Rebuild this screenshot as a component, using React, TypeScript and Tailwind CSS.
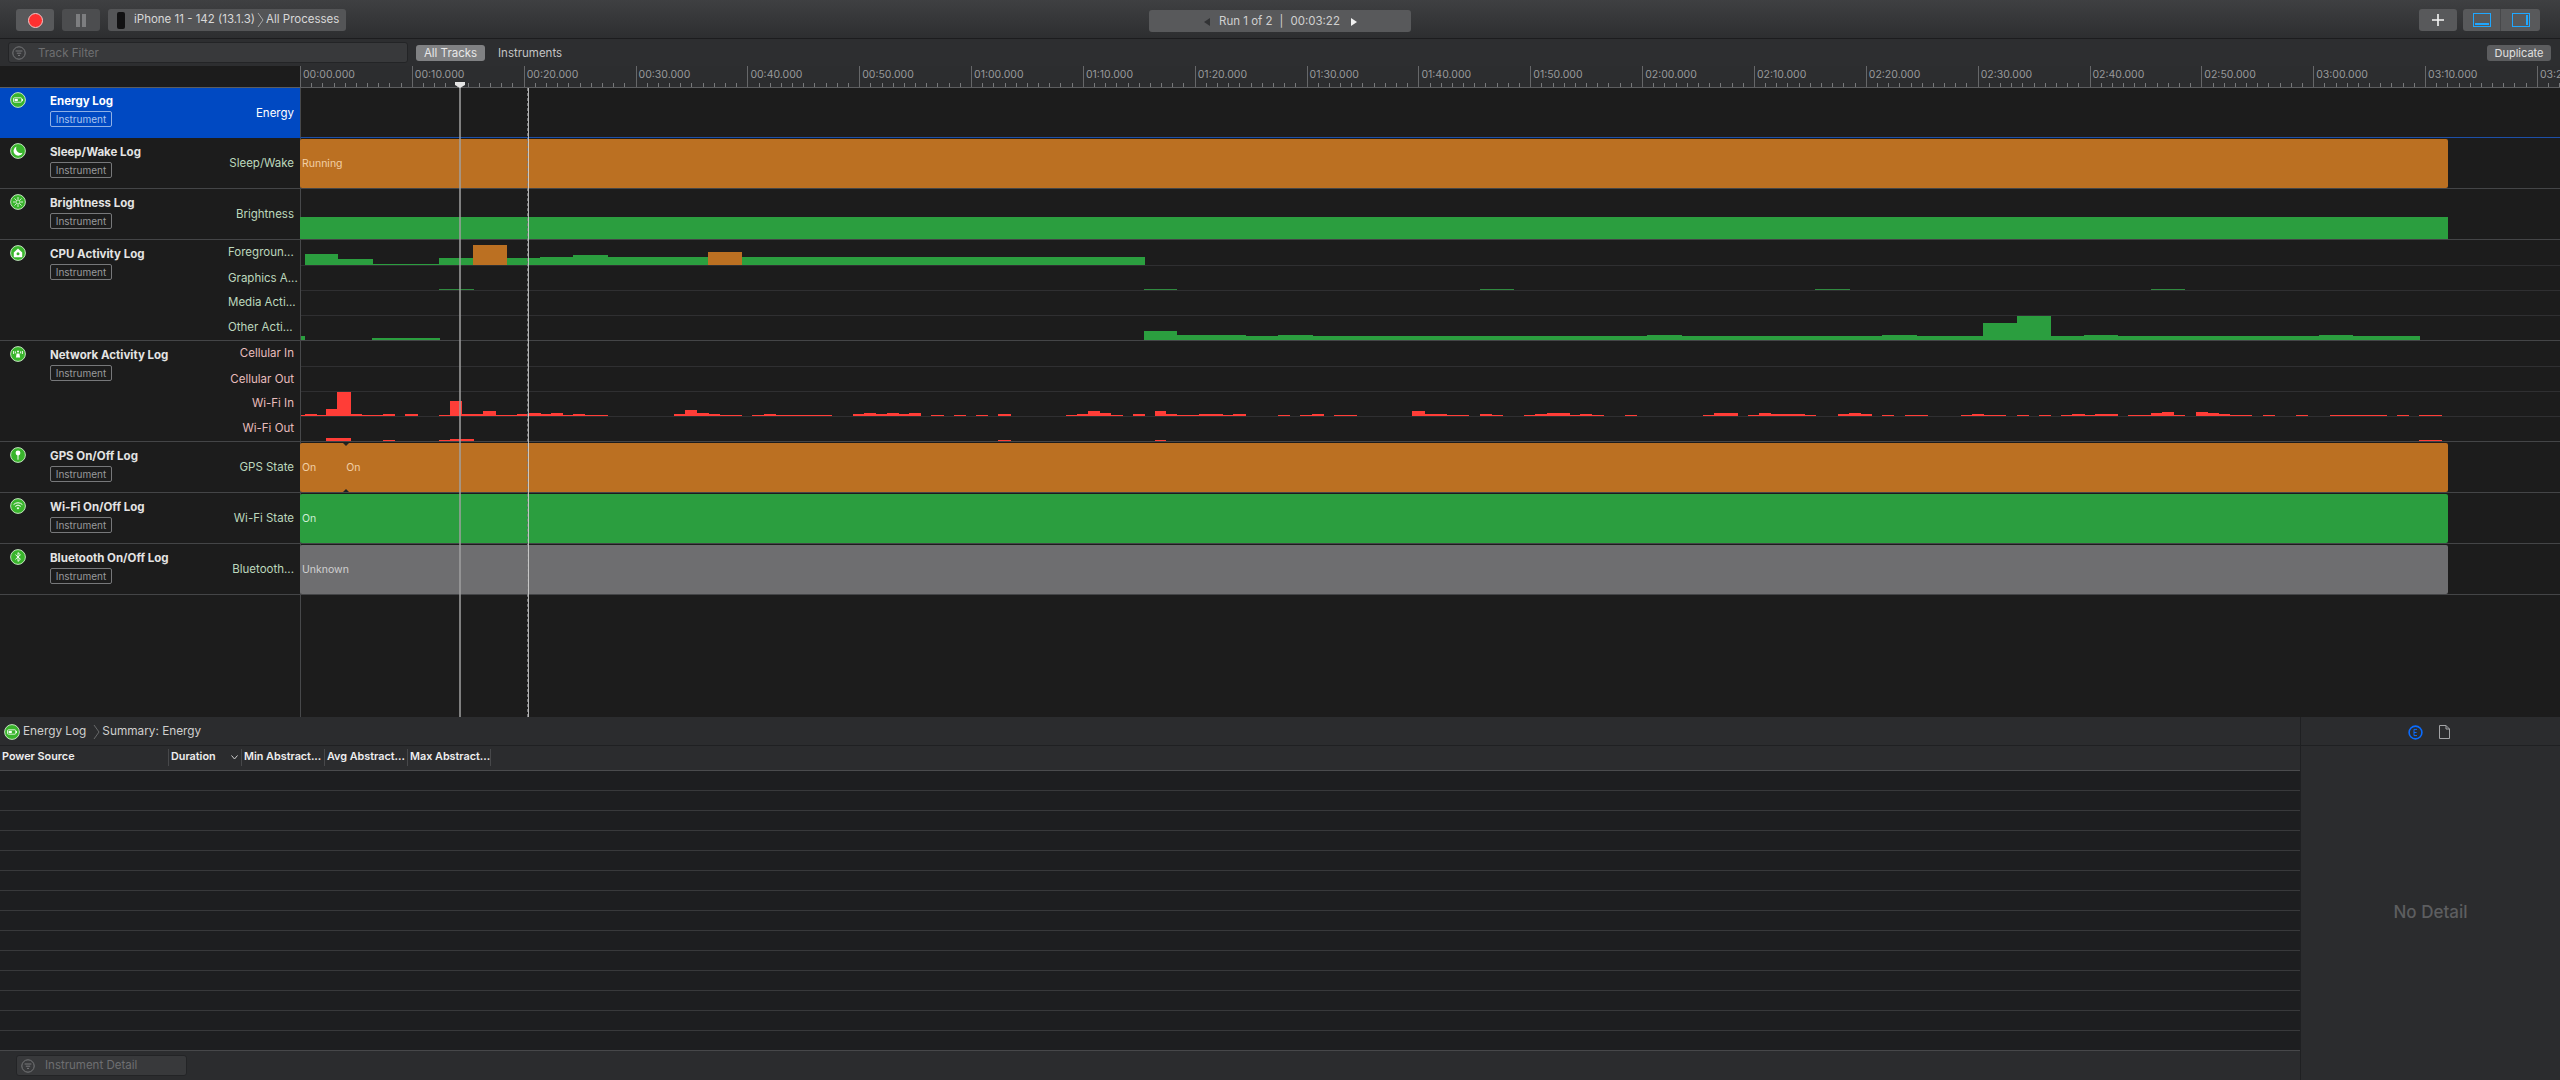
import type { ReactNode } from "react";

type Bar = [number, number, number, string?];

const GREEN = "#2b9e3f";
const ORANGE = "#bb7022";
const RED = "#ff3d37";

// bars use page x coordinates: [from, to, height, colour]
const foreground: Bar[] = [
  [305, 338, 11], [338, 373, 6], [373, 439, 1], [439, 473, 7], [473, 507, 20, ORANGE],
  [507, 540, 7], [540, 573, 8], [573, 608, 10], [608, 708, 8], [708, 742, 13, ORANGE],
  [742, 1145, 8],
];
const graphics: Bar[] = [
  [439, 474, 1], [1144, 1177, 1], [1480, 1514, 1], [1815, 1850, 1], [2151, 2185, 1],
];
const other: Bar[] = [
  [301, 305, 4], [372, 440, 2], [1144, 1177, 9], [1177, 1246, 5], [1246, 1278, 4],
  [1278, 1313, 5], [1313, 1647, 4], [1647, 1682, 5], [1682, 1882, 4], [1882, 1917, 5],
  [1917, 1983, 4], [1983, 2017, 17], [2017, 2051, 24], [2051, 2084, 4], [2084, 2118, 5],
  [2118, 2319, 4], [2319, 2353, 5], [2353, 2420, 4],
];
const wifiIn: Bar[] = [
  [301, 305, 1], [305, 317, 2], [317, 326, 1], [326, 337, 7], [337, 351, 24], [351, 362, 2],
  [362, 383, 1], [383, 395, 2], [405, 418, 2], [439, 450, 1], [450, 462, 15], [462, 483, 2],
  [483, 496, 5], [496, 517, 1], [517, 529, 2], [529, 541, 3], [541, 551, 2], [551, 563, 3],
  [563, 573, 1], [573, 585, 2], [585, 608, 1], [674, 685, 2], [685, 697, 6], [697, 709, 3],
  [709, 720, 2], [720, 742, 1], [752, 764, 1], [764, 776, 2], [776, 832, 1], [853, 864, 2],
  [864, 876, 3], [876, 887, 2], [887, 899, 3], [899, 909, 2], [909, 921, 3], [931, 944, 1],
  [954, 966, 1], [976, 988, 1], [998, 1011, 2], [1066, 1077, 1], [1077, 1088, 2], [1088, 1100, 5],
  [1100, 1111, 3], [1111, 1123, 1], [1133, 1145, 2], [1155, 1166, 5], [1166, 1177, 2],
  [1177, 1199, 1], [1199, 1223, 2], [1223, 1233, 1], [1233, 1246, 2], [1278, 1290, 1],
  [1300, 1312, 1], [1312, 1324, 2], [1334, 1357, 1], [1412, 1425, 5], [1425, 1447, 2],
  [1447, 1469, 1], [1480, 1492, 2], [1492, 1503, 1], [1524, 1535, 1], [1535, 1547, 2],
  [1547, 1570, 3], [1570, 1580, 1], [1580, 1592, 2], [1592, 1604, 1], [1625, 1637, 1],
  [1703, 1714, 1], [1714, 1738, 3], [1748, 1759, 1], [1759, 1771, 3], [1771, 1805, 2],
  [1805, 1816, 1], [1838, 1849, 2], [1849, 1861, 3], [1861, 1872, 2], [1882, 1894, 1],
  [1905, 1928, 1], [1961, 1972, 1], [1972, 1984, 2], [1984, 2006, 1], [2017, 2029, 1],
  [2039, 2051, 1], [2061, 2072, 1], [2072, 2085, 2], [2085, 2095, 1], [2095, 2118, 2],
  [2128, 2151, 1], [2151, 2162, 3], [2162, 2174, 4], [2174, 2185, 1], [2196, 2208, 4],
  [2208, 2219, 3], [2219, 2230, 2], [2230, 2252, 1], [2263, 2275, 1], [2296, 2308, 1],
  [2330, 2387, 1], [2397, 2409, 1], [2419, 2442, 1],
];
const wifiOut: Bar[] = [
  [326, 351, 3], [383, 395, 1], [439, 450, 1], [450, 474, 2], [998, 1011, 1], [1155, 1166, 1],
  [2419, 2442, 1],
];

const rulerLabels = Array.from({ length: 21 }, (_, i) => {
  const total = i * 10;
  const min = String(Math.floor(total / 60)).padStart(2, "0");
  const sec = String(total % 60).padStart(2, "0");
  return `${min}:${sec}.000`;
});

function LogIcon({ children, size = 16 }: { children?: ReactNode; size?: number }) {
  return (
    <svg width={size} height={size} viewBox="0 0 16 16" className="shrink-0">
      <circle cx="8" cy="8" r="7.4" fill="#39b52c" stroke="#d5efd0" strokeWidth="0.9" />
      {children}
    </svg>
  );
}

const icons: Record<string, ReactNode> = {
  energy: (
    <>
      <rect x="3.5" y="5.8" width="8.2" height="4.4" rx="0.8" fill="none" stroke="#fff" strokeWidth="0.8" />
      <rect x="4.6" y="6.9" width="3.2" height="2.2" fill="#fff" />
      <rect x="12" y="7" width="0.9" height="2" fill="#fff" />
    </>
  ),
  moon: <path d="M6.6 3.6a4.7 4.7 0 1 0 6 6.2 4.6 4.6 0 0 1-6-6.2z" fill="#fff" />,
  sun: (
    <>
      <circle cx="8" cy="8" r="2.1" fill="none" stroke="#fff" strokeWidth="0.8" />
      <path d="M8 3v2M8 11v2M3 8h2M11 8h2M4.5 4.5l1.4 1.4M10.1 10.1l1.4 1.4M11.5 4.5l-1.4 1.4M5.9 10.1l-1.4 1.4" stroke="#fff" strokeWidth="0.8" />
    </>
  ),
  cpu: (
    <>
      <path d="M8 3.6l4.2 4v4.6H3.8V7.6z" fill="#fff" />
      <circle cx="8" cy="8.8" r="1.5" fill="#39b52c" />
    </>
  ),
  network: (
    <>
      <path d="M3.6 5v3M12.4 5v3M5.4 5.4v2M10.6 5.4v2" stroke="#fff" strokeWidth="0.9" />
      <path d="M6.6 7.5h2.8l.7 4H5.9z" fill="#fff" />
      <circle cx="8" cy="5.4" r="1" fill="#fff" />
    </>
  ),
  gps: (
    <>
      <circle cx="8" cy="6" r="2.4" fill="#fff" />
      <rect x="7.5" y="7.5" width="1" height="5.2" fill="#fff" />
    </>
  ),
  wifi: (
    <>
      <path d="M3.6 6.6a6.2 6.2 0 0 1 8.8 0M5.2 8.4a4 4 0 0 1 5.6 0" fill="none" stroke="#fff" strokeWidth="1" />
      <path d="M6.6 10a2 2 0 0 1 2.8 0L8 11.6z" fill="#fff" />
    </>
  ),
  bluetooth: <path d="M5.4 5.6l5 4.6L8 12.4V3.6l2.4 2.2-5 4.6" fill="none" stroke="#fff" strokeWidth="0.9" />,
};

function FilterIcon() {
  return (
    <svg width="14" height="14" viewBox="0 0 14 14" className="shrink-0">
      <circle cx="7" cy="7" r="6.2" fill="none" stroke="#77787a" strokeWidth="1" />
      <path d="M3.6 5h6.8M4.8 7.2h4.4M6 9.4h2" stroke="#77787a" strokeWidth="1" />
    </svg>
  );
}

function Bars({ bars, height, color }: { bars: Bar[]; height: number; color: string }) {
  return (
    <svg width={2259} height={height} className="block">
      {bars.map(([from, to, h, fill], i) => (
        <rect key={i} x={from - 301} y={height - h} width={to - from} height={h} fill={fill ?? color} />
      ))}
    </svg>
  );
}

function Band({ color, className, children }: { color: string; className: string; children?: ReactNode }) {
  return (
    <div className={`relative mt-px -ml-px flex h-[49px] w-[2148px] items-center rounded-[2px] pl-[2px] pt-[1px] text-[10.5px] ${className}`} style={{ backgroundColor: color }}>
      {children}
    </div>
  );
}

function TrackTitle({ icon, title, selected }: { icon: string; title: string; selected?: boolean }) {
  return (
    <div className="flex w-[150px] shrink-0 items-start">
      <div className={`ml-[10px] w-[40px] shrink-0 ${selected ? "mt-[4px]" : "mt-[5px]"}`}>
        <LogIcon>{icons[icon]}</LogIcon>
      </div>
      <div className="shrink-0">
        <div className={`whitespace-nowrap text-[11.5px] font-bold leading-[16px] ${selected ? "mt-[5px] text-white" : "mt-[6px] text-[#e4e4e4]"}`}>
          {title}
        </div>
        <div className={`mt-[2px] flex h-[16px] w-[62px] items-center justify-center rounded-[2px] border text-[10px] ${selected ? "border-[#8fb0e6] text-[#a9c3ee]" : "border-[#77787a] text-[#98999b]"}`}>
          Instrument
        </div>
      </div>
    </div>
  );
}

function SimpleTrack({ icon, title, label, height = "h-[51px]", selected, border, children }: {
  icon: string;
  title: string;
  label: string;
  height?: string;
  selected?: boolean;
  border?: string;
  children?: ReactNode;
}) {
  return (
    <div className={`flex ${height}`}>
      <div className={`flex w-[300px] shrink-0 border-b ${selected ? "border-[#0049c2] bg-[#0049c2]" : "border-[#444547]"}`}>
        <TrackTitle icon={icon} title={title} selected={selected} />
        <div className={`flex flex-1 items-center justify-end pr-[6px] pt-[2px] text-[11.5px] ${selected ? "text-white" : "text-[#bcd8bd]"}`}>
          {label}
        </div>
      </div>
      <div className={`flex min-w-0 flex-1 flex-col border-b border-l border-l-[#47484a] ${border ?? "border-b-[#444547]"}`}>
        {children}
      </div>
    </div>
  );
}

function LaneTrack({ icon, title, lanes, labelClass }: {
  icon: string;
  title: string;
  labelClass: string;
  lanes: { label: string; bars: Bar[]; color: string }[];
}) {
  return (
    <div className="flex h-[101px]">
      <div className="flex w-[300px] shrink-0 border-b border-[#444547]">
        <TrackTitle icon={icon} title={title} />
        <div className="flex flex-1 flex-col pr-[6px] text-[11.5px]">
          {lanes.map((lane, i) => (
            <div key={lane.label} className={`flex w-full items-center ${i === 0 ? "h-[26px]" : "h-[25px]"} ${labelClass}`}>
              <span className="whitespace-nowrap">{lane.label}</span>
            </div>
          ))}
        </div>
      </div>
      <div className="flex min-w-0 flex-1 flex-col border-b border-l border-b-[#444547] border-l-[#47484a]">
        {lanes.map((lane, i) => (
          <div key={lane.label} className={i < 3 ? "border-b border-[#2f2f31]" : ""}>
            <Bars bars={lane.bars} color={lane.color} height={i === 0 ? 25 : 24} />
          </div>
        ))}
      </div>
    </div>
  );
}

function Ruler() {
  return (
    <div className="flex h-[22px] border-b border-[#5c5d5f]">
      <div className="w-[300px] shrink-0 bg-[#1c1c1c]" />
      <div className="flex min-w-0 flex-1 overflow-hidden bg-[#2c2d2f]">
        {rulerLabels.map((label) => (
          <div key={label} className="flex h-full w-[111.85px] shrink-0 flex-col border-l border-[#666769]">
            <div className="h-[16px] pl-[2px] pt-[1px] text-[10.5px] leading-[15px] text-[#98999b]">{label}</div>
            <div className="flex h-[5px] items-end">
              {Array.from({ length: 9 }, (_, i) => (
                <div key={i} className="ml-[10.18px] h-[4px] w-px bg-[#77787a]" />
              ))}
            </div>
          </div>
        ))}
      </div>
    </div>
  );
}

function Toolbar() {
  return (
    <div className="relative flex h-[39px] items-center border-b border-[#1c1c1e] bg-gradient-to-b from-[#3f4042] to-[#2d2e30] pl-[16px] pr-[20px] pt-[2px]">
      <div className="flex h-[22px] w-[38px] items-center justify-center rounded-[3px] bg-[#58595b]">
        <div className="h-[15px] w-[15px] rounded-full border border-[#f4c8c8] bg-[#ff3030]" />
      </div>
      <div className="ml-[8px] flex h-[22px] w-[38px] items-center justify-center gap-[2px] rounded-[3px] bg-[#4c4d4f]">
        <div className="h-[13px] w-[4px] bg-[#7d7e80]" />
        <div className="h-[13px] w-[4px] bg-[#7d7e80]" />
      </div>
      <div className="ml-[8px] flex h-[22px] w-[238px] items-center rounded-[3px] bg-[#545557] pl-[9px] text-[11.5px] text-[#d8d8d8]">
        <div className="h-[17px] w-[8px] rounded-[2px] bg-[#111112]" />
        <span className="ml-[9px] whitespace-nowrap">iPhone 11 - 142 (13.1.3)</span>
        <svg width="7" height="16" viewBox="0 0 7 16" className="mx-[2px]">
          <path d="M1 1l5 7-5 7" fill="none" stroke="#bdbdbd" strokeWidth="0.8" />
        </svg>
        <span className="whitespace-nowrap">All Processes</span>
      </div>

      <div className="absolute left-[1149px] top-[10px] flex h-[22px] w-[262px] items-center rounded-[3px] bg-[#58595b] pl-[55px] pt-[1px] text-[11.5px] text-[#d0d0d0]">
        <svg width="6" height="8" viewBox="0 0 6 8"><path d="M6 0v8L0 4z" fill="#323335" /></svg>
        <span className="ml-[9px] whitespace-nowrap">Run 1 of 2</span>
        <span className="ml-[7px]">|</span>
        <span className="ml-[7px] whitespace-nowrap">00:03:22</span>
        <svg width="6" height="8" viewBox="0 0 6 8" className="ml-[11px]"><path d="M0 0v8l6-4z" fill="#f0f0f0" /></svg>
      </div>

      <div className="ml-auto flex h-[22px] w-[38px] items-center justify-center rounded-[3px] bg-[#58595b]">
        <svg width="14" height="14" viewBox="0 0 14 14"><path d="M7 1v12M1 7h12" stroke="#f5f5f5" strokeWidth="1.6" /></svg>
      </div>
      <div className="ml-[6px] flex h-[22px] w-[77px] items-center rounded-[3px] bg-[#58595b]">
        <div className="flex h-full w-[38px] items-center justify-center border-r border-[#47484a]">
          <svg width="18" height="14" viewBox="0 0 18 14">
            <rect x="0.5" y="0.5" width="17" height="13" fill="none" stroke="#1fa7ff" />
            <rect x="2" y="10" width="14" height="2" fill="#1fa7ff" />
          </svg>
        </div>
        <div className="flex h-full flex-1 items-center justify-center">
          <svg width="18" height="14" viewBox="0 0 18 14">
            <rect x="0.5" y="0.5" width="17" height="13" fill="none" stroke="#1fa7ff" />
            <rect x="14" y="2" width="2" height="10" fill="#1fa7ff" />
          </svg>
        </div>
      </div>
    </div>
  );
}

function FilterBar() {
  return (
    <div className="flex h-[27px] items-center bg-[#2d2e30] pl-[8px] pr-[9px]">
      <div className="flex h-[21px] w-[400px] items-center rounded-[3px] border border-[#232426] bg-[#38393b] pl-[3px] pt-[0px] text-[11.5px] text-[#6e6f71]">
        <FilterIcon />
        <span className="ml-[12px] pt-[2px]">Track Filter</span>
      </div>
      <div className="ml-[8px] mt-[1px] flex h-[16px] w-[69px] items-center justify-center rounded-[3px] bg-[#808183] pt-[1px] text-[11.5px] text-[#e8e8e8]">
        All Tracks
      </div>
      <div className="ml-[13px] pt-[2px] text-[11.5px] text-[#c4c4c4]">Instruments</div>
      <div className="ml-auto mt-[1px] flex h-[16px] w-[64px] items-center justify-center rounded-[3px] bg-[#5c5d5f] text-[11px] text-[#e0e0e0]">
        Duplicate
      </div>
    </div>
  );
}

function Timeline() {
  return (
    <div className="relative flex h-[651px] flex-col bg-[#1c1c1c]">
      <Ruler />
      <SimpleTrack icon="energy" title="Energy Log" label="Energy" height="h-[50px]" selected border="border-b-[#1d4fa8]" />
      <SimpleTrack icon="moon" title="Sleep/Wake Log" label="Sleep/Wake">
        <Band color={ORANGE} className="text-[#f2cfa6]">Running</Band>
      </SimpleTrack>
      <SimpleTrack icon="sun" title="Brightness Log" label="Brightness">
        <div className="mt-auto -ml-px h-[22px] w-[2148px]" style={{ backgroundColor: GREEN }} />
      </SimpleTrack>
      <LaneTrack
        icon="cpu"
        title="CPU Activity Log"
        labelClass="pl-[78px] text-[#bcd8bd]"
        lanes={[
          { label: "Foregroun...", bars: foreground, color: GREEN },
          { label: "Graphics A...", bars: graphics, color: "#2f8a3f" },
          { label: "Media Acti...", bars: [], color: GREEN },
          { label: "Other Acti...", bars: other, color: GREEN },
        ]}
      />
      <LaneTrack
        icon="network"
        title="Network Activity Log"
        labelClass="justify-end text-[#e8bcbc]"
        lanes={[
          { label: "Cellular In", bars: [], color: RED },
          { label: "Cellular Out", bars: [], color: RED },
          { label: "Wi-Fi In", bars: wifiIn, color: RED },
          { label: "Wi-Fi Out", bars: wifiOut, color: RED },
        ]}
      />
      <SimpleTrack icon="gps" title="GPS On/Off Log" label="GPS State">
        <Band color={ORANGE} className="text-[#f2cfa6]">
          <span>On</span>
          <span className="ml-[30px]">On</span>
          <span className="absolute left-[43px] top-0 h-0 w-0 border-x-[3px] border-t-[3px] border-x-transparent border-t-[#222]" />
          <span className="absolute bottom-0 left-[43px] h-0 w-0 border-x-[3px] border-b-[3px] border-x-transparent border-b-[#222]" />
        </Band>
      </SimpleTrack>
      <SimpleTrack icon="wifi" title="Wi-Fi On/Off Log" label="Wi-Fi State">
        <Band color={GREEN} className="text-[#cfeed6]">On</Band>
      </SimpleTrack>
      <SimpleTrack icon="bluetooth" title="Bluetooth On/Off Log" label="Bluetooth...">
        <Band color="#6e6e70" className="text-[#d0d0d0]">Unknown</Band>
      </SimpleTrack>
      <div className="flex flex-1">
        <div className="w-[300px] shrink-0" />
        <div className="flex-1 border-l border-[#47484a]" />
      </div>

      {/* playhead and inspection line sit over the tracks */}
      <div className="absolute bottom-0 left-[459px] top-[20px] w-[2px] bg-[#a0a0a0]/75" />
      <svg width="10" height="6" viewBox="0 0 10 6" className="absolute left-[455px] top-[16px]">
        <path d="M0 0h10v3L5 6 0 3z" fill="#e4e4e4" />
      </svg>
      <div className="absolute bottom-0 left-[527px] top-[22px] w-px border-l border-dashed border-[#77787a]" />
      <div className="absolute bottom-0 left-[528px] top-[22px] w-px bg-[#dcdcdc]/80" />
    </div>
  );
}

function DetailPane() {
  const columns = [
    { label: "Power Source", width: "w-[169px]" },
    { label: "Duration", width: "w-[73px]", sort: true },
    { label: "Min Abstract...", width: "w-[83px]" },
    { label: "Avg Abstract...", width: "w-[83px]" },
    { label: "Max Abstract...", width: "w-[83px]" },
  ];
  return (
    <div className="flex min-h-0 flex-1 bg-[#2b2c2e]">
      <div className="flex w-[2300px] shrink-0 flex-col">
        <div className="flex h-[29px] items-center border-b border-[#1f2022] pl-[4px] pt-[2px] text-[11.8px] text-[#cfcfcf]">
          <LogIcon>{icons.energy}</LogIcon>
          <span className="ml-[3px]">Energy Log</span>
          <svg width="7" height="16" viewBox="0 0 7 16" className="ml-[7px]">
            <path d="M1 1l5 7-5 7" fill="none" stroke="#77787a" strokeWidth="0.8" />
          </svg>
          <span className="ml-[2px]">Summary: Energy</span>
        </div>
        <div className="flex h-[25px] items-center border-b border-[#4a4b4d] bg-[#2b2c2e] pb-[1px]">
          {columns.map((col) => (
            <div key={col.label} className={`flex h-[17px] items-center justify-between border-r border-[#47484a] pl-[2px] pr-[3px] text-[10.8px] font-semibold text-[#eeeeee] ${col.width}`}>
              <span className="whitespace-nowrap">{col.label}</span>
              {col.sort && (
                <svg width="7" height="5" viewBox="0 0 7 5"><path d="M0.5 0.5L3.5 4l3-3.5" fill="none" stroke="#cfcfcf" /></svg>
              )}
            </div>
          ))}
        </div>
        <div className="flex-1 bg-[#1d1e20]">
          {Array.from({ length: 14 }, (_, i) => (
            <div key={i} className={`h-[20px] border-b ${i === 13 ? "border-[#47484a]" : "border-[#38393b]"}`} />
          ))}
        </div>
        <div className="flex h-[29px] shrink-0 items-center pl-[16px]">
          <div className="flex h-[21px] w-[171px] items-center rounded-[3px] border border-[#232426] bg-[#38393b] pl-[4px] text-[11.5px] text-[#6e6f71]">
            <FilterIcon />
            <span className="ml-[10px] pt-[1px]">Instrument Detail</span>
          </div>
        </div>
      </div>
      <div className="flex flex-1 flex-col border-l border-[#1f2022]">
        <div className="flex h-[29px] items-center border-b border-[#1f2022] pl-[107px] pt-[2px]">
          <svg width="15" height="15" viewBox="0 0 15 15">
            <circle cx="7.5" cy="7.5" r="6.4" fill="none" stroke="#0a6cff" strokeWidth="1.6" />
            <path d="M9 4.4H6v6.2h3M6 7.5h2.6" fill="none" stroke="#0a6cff" />
          </svg>
          <svg width="11" height="14" viewBox="0 0 11 14" className="ml-[16px]">
            <path d="M0.5 0.5h6.5l3.5 3.5v9.5h-10zM7 0.5V4h3.5" fill="none" stroke="#a3a4a6" />
          </svg>
        </div>
        <div className="flex flex-1 items-center justify-center text-[17px] font-medium text-[#5d5e60]">No Detail</div>
      </div>
    </div>
  );
}

export default function App() {
  return (
    <div className="flex h-[1080px] w-[2560px] flex-col overflow-hidden bg-[#1c1c1c] font-['Inter',sans-serif]">
      <Toolbar />
      <FilterBar />
      <Timeline />
      <DetailPane />
    </div>
  );
}
